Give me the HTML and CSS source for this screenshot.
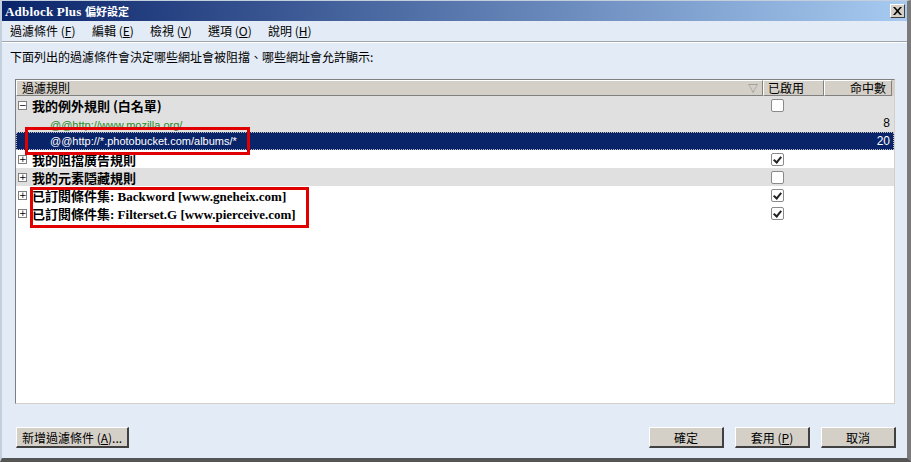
FILE: index.html
```html
<!DOCTYPE html>
<html lang="zh-Hant">
<head>
<meta charset="utf-8">
<title>Adblock Plus 偏好設定</title>
<link rel="stylesheet" href="styles.css">
</head>
<body>
<div class="window">
  <div class="titlebar">
    <span class="title">Adblock Plus <span class="title-cjk">偏好設定</span></span>
    <span class="close">
      <svg width="9" height="8" viewBox="0 0 9 8"><path d="M0 0h2l2.5 2.8L7 0h2L5.5 4L9 8H7L4.5 5.2L2 8H0l3.5-4z" fill="#000"/></svg>
    </span>
  </div>
  <div class="menubar">
    <span class="menu m1">過濾條件 (<u>F</u>)</span>
    <span class="menu m2">編輯 (<u>E</u>)</span>
    <span class="menu m3">檢視 (<u>V</u>)</span>
    <span class="menu m4">選項 (<u>O</u>)</span>
    <span class="menu m5">說明 (<u>H</u>)</span>
  </div>
  <div class="desc">下面列出的過濾條件會決定哪些網址會被阻擋、哪些網址會允許顯示:</div>
  <div class="tree">
    <div class="hdr">
      <div class="hcell h1"><span>過濾規則</span><span class="sort">▽</span></div>
      <div class="hcell h2">已啟用</div>
      <div class="hcell h3">命中數</div>
    </div>
    <div class="row grey">
      <div class="c1"><span class="tw">−</span><span class="grp">我的例外規則 (白名單)</span></div>
      <div class="c2"><span class="cb"></span></div>
      <div class="c3"></div>
    </div>
    <div class="row grey child low">
      <div class="c1"><span class="rule green">@@http://www.mozilla.org/</span></div>
      <div class="c2"></div>
      <div class="c3">8</div>
    </div>
    <div class="row sel child">
      <div class="c1"><span class="rule">@@http://*.photobucket.com/albums/*</span></div>
      <div class="c2"></div>
      <div class="c3">20</div>
    </div>
    <div class="row">
      <div class="c1"><span class="tw">+</span><span class="grp">我的阻擋廣告規則</span></div>
      <div class="c2"><span class="cb on"></span></div>
      <div class="c3"></div>
    </div>
    <div class="row grey">
      <div class="c1"><span class="tw">+</span><span class="grp">我的元素隱藏規則</span></div>
      <div class="c2"><span class="cb"></span></div>
      <div class="c3"></div>
    </div>
    <div class="row">
      <div class="c1"><span class="tw">+</span><span class="grp">已訂閱條件集<span class="lat">: Backword [www.gneheix.com]</span></span></div>
      <div class="c2"><span class="cb on"></span></div>
      <div class="c3"></div>
    </div>
    <div class="row">
      <div class="c1"><span class="tw">+</span><span class="grp">已訂閱條件集<span class="lat">: Filterset.G [www.pierceive.com]</span></span></div>
      <div class="c2"><span class="cb on"></span></div>
      <div class="c3"></div>
    </div>
  </div>
  <div class="footer">
    <button class="btn wide">新增過濾條件 (<u>A</u>)...</button>
    <span class="spacer"></span>
    <button class="btn">確定</button>
    <button class="btn">套用 (<u>P</u>)</button>
    <button class="btn">取消</button>
  </div>
  <div class="mark mark1"></div>
  <div class="mark mark2"></div>
</div>
</body>
</html>
```
FILE: styles.css
```css
html, body {
  margin: 0;
  padding: 0;
  background: #e3ebf6;
}
body {
  font-family: "Noto Sans CJK TC", "Liberation Sans", sans-serif;
  font-size: 12px;
  color: #000;
}
.window {
  position: relative;
  width: 911px;
  height: 462px;
  box-sizing: border-box;
  border-top: 1px solid #c4cfdd;
  border-left: 2px solid #c4cfdd;
  border-right: 4px solid #7a7a7a;
  border-bottom: 4px solid #555;
  background: #e3ebf6;
  display: flex;
  flex-direction: column;
  overflow: hidden;
}
.titlebar {
  height: 20px;
  background: linear-gradient(to right, #0a246a, #a6caf0);
  display: flex;
  align-items: center;
  padding: 0 2px 0 3px;
}
.title {
  color: #fff;
  font-family: "Liberation Serif", "Noto Sans CJK TC", serif;
  font-weight: bold;
  font-size: 13px;
  letter-spacing: 0.2px;
}
.title-cjk {
  font-family: "Noto Sans CJK TC", sans-serif;
  font-size: 11px;
  letter-spacing: 0;
}
.close {
  margin-left: auto;
  width: 13px;
  height: 12px;
  background: #d4d0c8;
  border-top: 1px solid #fff;
  border-left: 1px solid #fff;
  border-right: 1px solid #404040;
  border-bottom: 1px solid #404040;
  display: flex;
  align-items: center;
  justify-content: center;
}
.menubar {
  height: 20px;
  display: flex;
  align-items: center;
  padding-left: 8px;
  border-bottom: 1px solid #a0a6ae;
  box-shadow: 0 1px 0 #fff;
}
.menu {
  line-height: 16px;
  white-space: nowrap;
}
.m1 { width: 82px; }
.m2 { width: 58px; }
.m3 { width: 58px; }
.m4 { width: 60px; }
.desc {
  padding: 7px 0 15px 8px;
  line-height: 15px;
}
.tree {
  margin: 0 12px 0 13px;
  height: 325px;
  box-sizing: border-box;
  border: 1px solid #7f7f7f;
  border-right-color: #d4d0c8;
  border-bottom-color: #d4d0c8;
  background: #fff;
  font-size: 12px;
}
.hdr {
  display: grid;
  grid-template-columns: 747px 61px 68px;
  height: 16px;
  background: #d4d0c8;
}
.hcell {
  box-sizing: border-box;
  border-top: 1px solid #fff;
  border-left: 1px solid #fff;
  border-right: 1px solid #808080;
  border-bottom: 1px solid #808080;
  line-height: 14px;
  white-space: nowrap;
  overflow: hidden;
}
.h1 {
  display: flex;
  padding-left: 5px;
  padding-right: 4px;
}
.sort {
  margin-left: auto;
  color: #808080;
  font-size: 10px;
}
.h2 { padding-left: 4px; }
.h3 { text-align: right; padding-right: 5px; }
.row {
  display: grid;
  grid-template-columns: 747px 61px 68px;
  height: 18px;
  align-items: center;
  background: #fff;
  box-sizing: border-box;
}
.row.grey { background: #e0e0e0; }
.row.sel {
  background: #0a246a;
  color: #fff;
  outline: 1px dotted #c0c0c0;
  outline-offset: -1px;
}
.row.low .c1 { padding-top: 3px; }
.c1 {
  display: flex;
  align-items: center;
  white-space: nowrap;
  overflow: hidden;
}
.c2 {
  display: flex;
  justify-content: flex-start;
  padding-left: 8px;
}
.c3 {
  text-align: right;
  padding-right: 2px;
  font-family: "Liberation Sans", sans-serif;
  font-size: 12px;
}
.tw {
  width: 7px;
  height: 7px;
  border: 1px solid #808080;
  background: #fff;
  margin: 0 5px 0 2px;
  font-family: "DejaVu Sans", sans-serif;
  font-size: 9px;
  line-height: 7px;
  text-align: center;
  color: #000;
  flex: none;
}
.grp {
  font-weight: bold;
  font-size: 13px;
}
.lat {
  font-family: "Liberation Serif", serif;
  font-size: 13px;
  font-weight: bold;
}
.rule {
  padding-left: 34px;
  font-family: "Liberation Sans", sans-serif;
  font-size: 11px;
}
.green { color: #2a8a2a; }
.cb {
  width: 11px;
  height: 11px;
  border: 1px solid #8a8a8a;
  border-radius: 2px;
  background: #fff;
  position: relative;
}
.cb.on::after {
  content: "";
  position: absolute;
  left: 3px;
  top: 1px;
  width: 3px;
  height: 6px;
  border-right: 2px solid #222;
  border-bottom: 2px solid #222;
  transform: rotate(40deg);
}
.footer {
  display: flex;
  align-items: flex-start;
  padding: 23px 11px 0 14px;
  gap: 11px;
}
.spacer { flex: 1; }
.btn {
  font-family: "Noto Sans CJK TC", "Liberation Sans", sans-serif;
  font-size: 12px;
  height: 21px;
  width: 75px;
  padding: 0;
  background: #d4d0c8;
  border-top: 1px solid #fff;
  border-left: 1px solid #fff;
  border-right: 2px solid #404040;
  border-bottom: 2px solid #404040;
  line-height: 17px;
  color: #000;
}
.btn.wide { width: 113px; }
.mark {
  position: absolute;
  border: 3px solid #e00000;
  box-sizing: border-box;
}
.mark1 { left: 23px; top: 126px; width: 225px; height: 28px; }
.mark2 { left: 28px; top: 186px; width: 279px; height: 41px; }
```
